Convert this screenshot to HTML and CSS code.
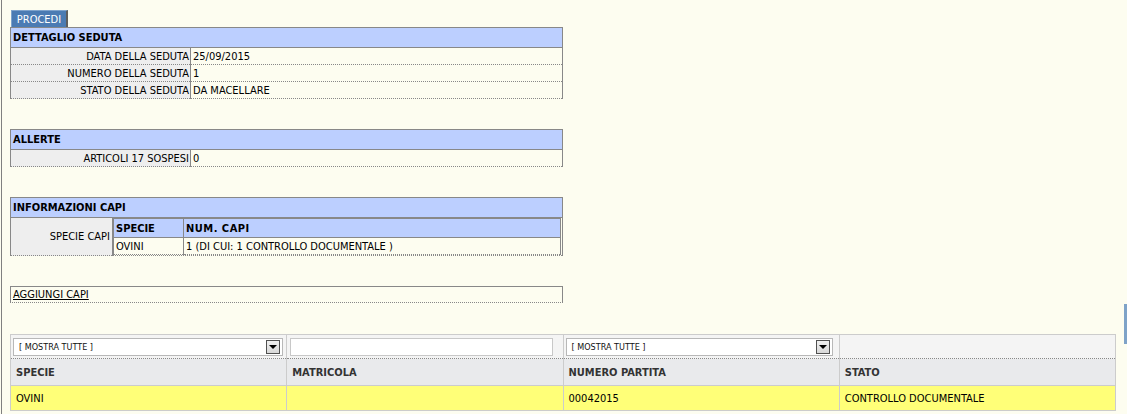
FILE: index.html
```html
<!DOCTYPE html>
<html>
<head>
<meta charset="utf-8">
<link rel="stylesheet" href="styles.css">
</head>
<body>
<div class="page">
  <div class="toolbar"><span class="btn">PROCEDI</span></div>

  <table class="box">
    <colgroup><col class="c180"><col></colgroup>
    <tr><th colspan="2" class="title">DETTAGLIO SEDUTA</th></tr>
    <tr><td class="lbl">DATA DELLA SEDUTA</td><td class="val">25/09/2015</td></tr>
    <tr><td class="lbl">NUMERO DELLA SEDUTA</td><td class="val">1</td></tr>
    <tr><td class="lbl">STATO DELLA SEDUTA</td><td class="val">DA MACELLARE</td></tr>
  </table>

  <table class="box">
    <colgroup><col class="c180"><col></colgroup>
    <tr><th colspan="2" class="title">ALLERTE</th></tr>
    <tr><td class="lbl">ARTICOLI 17 SOSPESI</td><td class="val">0</td></tr>
  </table>

  <table class="box">
    <colgroup><col class="c102"><col></colgroup>
    <tr><th colspan="2" class="title">INFORMAZIONI CAPI</th></tr>
    <tr>
      <td class="lbl mid">SPECIE CAPI</td>
      <td class="nestcell">
        <table class="nest">
          <colgroup><col class="c70"><col></colgroup>
          <tr><th class="nh">SPECIE</th><th class="nh spaced">NUM. CAPI</th></tr>
          <tr><td class="nv">OVINI</td><td class="nv">1 (DI CUI: 1 CONTROLLO DOCUMENTALE )</td></tr>
        </table>
      </td>
    </tr>
  </table>

  <div class="addbox"><a href="#" class="link">AGGIUNGI CAPI</a></div>

  <table class="grid">
    <tr class="filters">
      <td><div class="sel s1"><span class="seltxt">[ MOSTRA TUTTE ]</span><span class="selbtn"><span class="tri"></span></span></div></td>
      <td><div class="inp"></div></td>
      <td><div class="sel s3"><span class="seltxt">[ MOSTRA TUTTE ]</span><span class="selbtn"><span class="tri"></span></span></div></td>
      <td></td>
    </tr>
    <tr class="ghead">
      <th>SPECIE</th><th>MATRICOLA</th><th>NUMERO PARTITA</th><th>STATO</th>
    </tr>
    <tr class="grow">
      <td>OVINI</td><td></td><td>00042015</td><td>CONTROLLO DOCUMENTALE</td>
    </tr>
  </table>
</div>
<div class="sidebar-mark"></div>
</body>
</html>
```

FILE: styles.css
```css
html, body {
  margin: 0;
  padding: 0;
  background: #fdfdf0;
}
body {
  font-family: "DejaVu Sans Condensed", "DejaVu Sans", sans-serif;
  font-stretch: condensed;
  font-size: 11px;
  color: #000;
}
.page {
  margin-left: 1px;
  border-left: 1px solid #808080;
  padding: 10px 0 0 8px;
  min-height: 414px;
  box-sizing: border-box;
}
.toolbar {
  display: flex;
  height: 17px;
}
.btn {
  display: flex;
  align-items: center;
  justify-content: center;
  margin-left: 1px;
  width: 57px;
  height: 17px;
  box-sizing: border-box;
  background: #4b7bb3;
  color: #fff;
  border-top: 1px solid #7fa3cc;
  border-left: 1px solid #7fa3cc;
  border-right: 2px solid #5e5e5e;
  font-size: 11px;
}
.box {
  width: 553px;
  border-collapse: collapse;
  border-top: 1px solid #888;
  border-left: 1px solid #888;
  border-right: 1px solid #888;
  margin-bottom: 30px;
  table-layout: fixed;
}
.c180 { width: 180px; }
.c102 { width: 102px; }
.c70 { width: 70px; }
.box td, .box th {
  padding: 0;
}
.title {
  background: #bccfff;
  text-align: left;
  height: 19px;
  padding: 0 2px !important;
  border-bottom: 1px solid #888;
  font-weight: bold;
}
.lbl {
  background: #eeeeee;
  text-align: right;
  border-right: 1px solid #888;
  border-bottom: 1px dotted #888;
  height: 16px;
  padding-right: 1px !important;
  white-space: nowrap;
}
.mid { vertical-align: middle; padding-right: 2px !important; }
.val {
  border-bottom: 1px dotted #888;
  height: 16px;
  padding-left: 2px !important;
}
.nestcell {
  border-bottom: 1px dotted #888;
  padding: 0 1px 0 0 !important;
}
.nest {
  width: 100%;
  border-collapse: collapse;
  border: 1px solid #888;
  border-bottom: 0;
  table-layout: fixed;
}
.nest td, .nest th { padding: 0 2px; white-space: nowrap; }
.nh {
  background: #bccfff;
  text-align: left;
  font-weight: bold;
  height: 18px;
  border-bottom: 1px solid #888;
  border-right: 1px solid #888;
}
.spaced { letter-spacing: 0.5px; }
.nv {
  height: 16px;
  border-bottom: 1px dotted #888;
  border-right: 1px solid #888;
}
.addbox {
  width: 553px;
  box-sizing: border-box;
  height: 17px;
  border: 1px solid #888;
  border-bottom: 1px dotted #888;
  padding-left: 2px;
  margin-bottom: 31px;
  display: flex;
  align-items: center;
}
.link {
  color: #000;
  text-decoration: underline;
}
.grid {
  width: 1106px;
  border-collapse: collapse;
  table-layout: fixed;
  border: 1px solid #ccc;
}
.grid td, .grid th {
  border-left: 1px solid #ccc;
  border-right: 1px solid #ccc;
  padding: 0 5px;
  text-align: left;
}
.filters td {
  background: #f4f4f4;
  height: 23px;
  padding: 0 2px;
  border-bottom: 1px dotted #888;
}
.ghead th {
  background: #e9eaec;
  height: 26px;
  border-bottom: 1px solid #ccc;
  color: #333;
  font-weight: bold;
}
.grow td {
  background: #ffff78;
  height: 24px;
  border-bottom: 1px dotted #888;
}
.sel {
  display: flex;
  align-items: center;
  justify-content: space-between;
  height: 18px;
  box-sizing: border-box;
  border: 1px solid #b8b8b8;
  background: #fff;
  padding: 0 2px 0 5px;
}
.s1 { width: 270px; }
.s3 { width: 267px; }
.seltxt {
  font-size: 9px;
  color: #111;
}
.selbtn {
  width: 14px;
  height: 14px;
  box-sizing: border-box;
  border: 1px solid #505050;
  background: linear-gradient(#f0f0f0, #d8d8d8);
  display: flex;
  align-items: center;
  justify-content: center;
}
.tri {
  width: 0;
  height: 0;
  border-left: 4px solid transparent;
  border-right: 4px solid transparent;
  border-top: 4px solid #000;
}
.inp {
  margin-left: 1px;
  width: 263px;
  height: 18px;
  box-sizing: border-box;
  border: 1px solid #c8c8c8;
  background: #fff;
}
.sidebar-mark {
  position: absolute;
  right: 0;
  top: 304px;
  width: 3px;
  height: 40px;
  background: #7fa3c8;
}
```
